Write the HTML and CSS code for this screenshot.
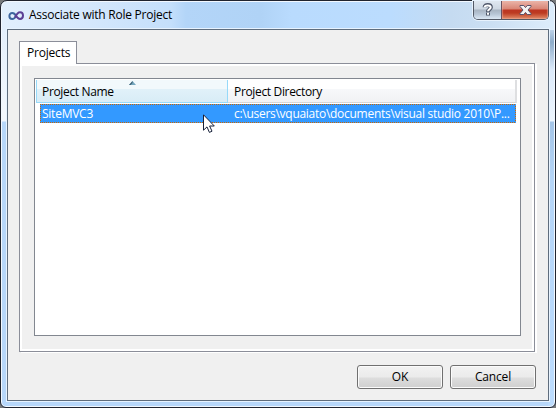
FILE: index.html
```html
<!DOCTYPE html>
<html lang="en">
<head>
<meta charset="utf-8">
<title>Associate with Role Project</title>
<link rel="stylesheet" href="styles.css">
</head>
<body>
<main class="window">
  <header class="titlebar">
    <svg class="logo" width="16" height="12" viewBox="0 0 16 12" fill="none">
      <path d="M8.2 6C6.8 3.6 5.6 3 4.3 3C2.4 3 1.4 4.2 1.4 6S2.6 9 4.3 9C6 9 7 8 8.2 6" stroke="#3c659e" stroke-width="2"/>
      <path d="M7 7.5C8.5 4.2 10 2.2 12 2.2C14 2.2 15 3.8 15 5.6C15 7.8 13.8 9 12 9C10.2 9 9.1 7.6 8 5.8" stroke="#5b3f94" stroke-width="2"/>
    </svg>
    <h1 class="title">Associate with Role Project</h1>
    <div class="controls">
      <button class="help" aria-label="Help">
        <svg width="12" height="14" viewBox="0 0 12 14" fill="none">
          <path d="M2.6 4.2C2.6 1.3 8.9 1.3 8.9 4.3C8.9 6.2 6 6.2 6 9M6 9.4V12.6" stroke="#50586b" stroke-width="4"/>
          <path d="M2.6 4.2C2.6 1.8 8.7 1.8 8.7 4.3C8.7 6.2 6 6.2 6 8.2M6 9.8V11.7" stroke="#fff" stroke-width="2"/>
        </svg>
      </button>
      <button class="close" aria-label="Close">
        <svg width="13" height="12" viewBox="0 0 13 12">
          <path d="M1 1.5H4.8L6.5 3.6L8.2 1.5H12V2.5L9 6L12 9.5V10.5H8.2L6.5 8.4L4.8 10.5H1V9.5L4 6L1 2.5Z" fill="#f5f3f3" stroke="#59526a"/>
        </svg>
      </button>
    </div>
  </header>
  <section class="client">
    <div class="tab">Projects</div>
    <div class="panel">
      <div class="list">
        <div class="head">
          <div class="col name sorted"><span>Project Name</span>
            <svg class="sort" width="7" height="4" viewBox="0 0 7 4"><path d="M0 4L3.5 0L7 4Z" fill="#76a8bf"/><path d="M0 4L3.5 0V2L1.5 4Z" fill="#3c5e72"/></svg>
          </div>
          <div class="col directory"><span>Project Directory</span></div>
        </div>
        <div class="row">
          <div class="cell first"><span>SiteMVC3</span></div>
          <div class="cell path"><span>c:\users\vquaiato\documents\visual studio 2010\P...</span></div>
        </div>
      </div>
    </div>
    <footer class="actions">
      <button class="btn">OK</button>
      <button class="btn">Cancel</button>
    </footer>
  </section>
</main>
<svg class="cursor" width="12" height="20" viewBox="0 0 12 20"><path d="M.5 .8V16.2L4 12.9L6.4 18.4L9 17.2L6.6 12H11.3Z" fill="#fff" stroke="#17213a"/></svg>
</body>
</html>
```
FILE: styles.css
```css
* { box-sizing: border-box; }
body {
  margin: 0;
  width: 556px;
  height: 408px;
  overflow: hidden;
  background: #77797b;
  font: 12px/16px "Open Sans", "Noto Sans", sans-serif;
  color: #000;
}
button { font: inherit; color: inherit; margin: 0; padding: 0; }
.window {
  width: 556px;
  height: 408px;
  padding: 0 6px 6px;
  border: 1px solid #20242f;
  border-radius: 7px 7px 6px 6px;
  box-shadow: inset 0 0 0 1px #f2f8ff;
  background:
    linear-gradient(#e4effb 0, #f2f7fd 80px, #f2f7fd 91px, transparent 92px) 0 29px / 7px 92px no-repeat,
    linear-gradient(#bdd2e8 0, #8eacc9 12px, #dceafa 40px, #eef6fe 91px, #a5c5e7 92px, #b5d5f7 150px, #bcdcfe 100%) 100% 29px / 7px 378px no-repeat,
    linear-gradient(90deg, #e2effd 0, #d4e7fc 90px, #c4dffb 170px, #b3d5f8 185px, #b0d3f6 260px, #b9dbfe 290px, #bbdcfe 390px, #c5dbf1 450px, #cbdff3 490px, #dcecfb 550px) 0 0 / 100% 29px no-repeat,
    #b7d7fa;
}
.titlebar { height: 28px; display: flex; }
.logo { margin: 9px 0 0 1px; }
.title {
  margin: 6px 0 0 5px;
  font: inherit;
  letter-spacing: -.24px;
  white-space: nowrap;
}
.controls {
  width: 76px;
  height: 19px;
  margin-left: auto;
  display: flex;
  border: 1px solid #535966;
  border-top: 0;
  border-radius: 0 0 5px 5px;
  box-shadow: 0 0 0 1px #e7f2fd;
  overflow: hidden;
}
.controls button { border: 0; display: flex; align-items: center; justify-content: center; }
.controls .help {
  width: 28px;
  border-right: 1px solid #6a5260;
  background: linear-gradient(#dfe7f0 0, #ced8e3 8px, #a8b4c2 9px, #b7c5d5 13px, #dce8f5 18px);
}
.controls .close {
  flex: 1;
  background: linear-gradient(#eab4a9 0, #d98575 8px, #bc3522 9px, #bd3b22 12px, #e28c69 18px);
  box-shadow: inset 0 0 1px 1px #edb2a180;
}
.client {
  height: 372px;
  padding: 11px 12px 0 11px;
  border: 1px solid #5f6d7d;
  background: #f0f0f0;
  box-shadow: 0 0 0 1px #e7f3ff;
}
.tab {
  position: relative;
  width: 58px;
  height: 23px;
  padding: 3px 0 0 7px;
  border: 1px solid #8b8e99;
  border-bottom: 0;
  background: #fff;
  letter-spacing: -.2px;
  z-index: 1;
}
.panel {
  width: 516px;
  height: 289px;
  margin-top: -1px;
  padding: 12px 11px 13px 12px;
  border: 1px solid #8b8e99;
  background: #f0f0f0;
  box-shadow: inset 0 0 0 2px #fff, 2px 1px 0 #fff;
}
.list {
  width: 487px;
  height: 258px;
  margin: 2px 0 0 2px;
  border: 1px solid #828790;
  background: #fff;
}
.head { height: 24px; padding: 1px 3px 0 1px; display: flex; }
.col {
  height: 23px;
  padding: 4px 6px 0;
  border-bottom: 1px solid #d5d5d5;
  background: linear-gradient(#fff 0, #fff 9px, #f7f8fa 9px, #f1f2f4 100%);
  letter-spacing: -.34px;
  white-space: nowrap;
}
.name {
  position: relative;
  width: 192px;
  padding-left: 5px;
  border: 1px solid #96d9f9;
  border-top: 0;
  background: linear-gradient(#f2f9fc 0, #f2f9fc 9px, #e1f1f9 9px, #d8ecf6 100%);
}
.sort { position: absolute; left: 92px; top: 1px; }
.directory { flex: 1; border-right: 2px solid #dedfe1; }
.row {
  width: 476px;
  height: 19px;
  margin: 1px 0 0 5px;
  padding: 1px;
  display: flex;
  color: #fff;
  background:
    linear-gradient(90deg, #cc6600 50%, #3399ff 50%) 0 0 / 2px 1px repeat-x,
    linear-gradient(90deg, #cc6600 50%, #3399ff 50%) 0 100% / 2px 1px repeat-x,
    linear-gradient(#cc6600 50%, #3399ff 50%) 0 0 / 1px 2px repeat-y,
    linear-gradient(#cc6600 50%, #3399ff 50%) 100% 0 / 1px 2px repeat-y,
    #3399ff;
}
.cell { white-space: nowrap; line-height: 17px; padding-left: 1px; }
.first { width: 192px; letter-spacing: -.25px; }
.path { letter-spacing: -.28px; }
.actions { display: flex; justify-content: flex-end; gap: 7px; margin-top: 13px; }
.btn {
  width: 86px;
  height: 24px;
  border: 1px solid #707070;
  border-radius: 3px;
  background: linear-gradient(#f2f2f2 0, #ebebeb 11px, #dddddd 12px, #cfcfcf 100%);
  box-shadow: inset 0 0 0 1px #fbfbfb;
  letter-spacing: -.15px;
}
.cursor { position: absolute; left: 203px; top: 114px; }
```
